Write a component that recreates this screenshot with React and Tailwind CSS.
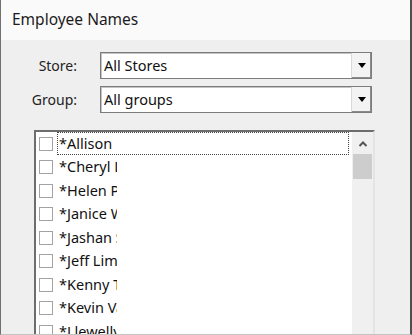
import React from "react"

const names = [
  "*Allison",
  "*Cheryl Lawson",
  "*Helen Parker",
  "*Janice Walker",
  "*Jashan Singh",
  "*Jeff Limon",
  "*Kenny Tran",
  "*Kevin Vance",
  "*Llewellyn Smith",
]

function Combo({ value }) {
  return (
    <div className="flex h-[27px] w-[272px] border border-[#7c7c7c] bg-white shadow-[inset_1px_1px_0_#c4c4c4]">
      <div className="flex flex-1 items-center pl-[3px] text-[14.5px] text-[#111]">{value}</div>
      <div className="flex w-[20px] items-center justify-center border-l border-[#d9d9d9] bg-[#f4f3f4] shadow-[inset_-1px_-1px_0_#8a8a8a]">
        <div className="h-0 w-0 border-x-[4px] border-t-[5px] border-x-transparent border-t-black" />
      </div>
    </div>
  )
}

export default function App() {
  return (
    <div
      className="h-[335px] w-[412px] overflow-hidden border-b border-l border-r-2 border-b-[#c4c4c4] border-l-[#707070] border-r-[#4f4f4f] bg-[#f0eff0]"
      style={{ fontFamily: '"Noto Sans", "Open Sans", sans-serif' }}
    >
      {/* title */}
      <div className="flex h-[40px] items-center bg-[#fbfafb] pl-[11px] text-[15.5px] text-[#1b1b1b]">
        Employee Names
      </div>

      {/* filters */}
      <div className="flex flex-col gap-[7px] pt-[12px]">
        <div className="flex items-center">
          <div className="w-[76px] text-right text-[14px] text-[#222]">Store:</div>
          <div className="ml-[23px]">
            <Combo value="All Stores" />
          </div>
        </div>
        <div className="flex items-center">
          <div className="w-[76px] text-right text-[14px] text-[#222]">Group:</div>
          <div className="ml-[23px]">
            <Combo value="All groups" />
          </div>
        </div>
      </div>

      {/* employee list */}
      <div className="ml-[33px] mt-[17px] flex h-[210px] w-[341px] border-l-2 border-t-2 border-r-2 border-l-[#6d6d6d] border-t-[#6d6d6d] border-r-[#e4e4e4] bg-white">
        <div className="flex flex-1 flex-col">
          {names.map((name, i) => (
            <div key={name} className="flex h-[23.5px] shrink-0 items-center">
              <div className="ml-[3px] h-[14px] w-[14px] border border-[#a3a3a3] bg-white" />
              <div
                className={
                  i === 0
                    ? "ml-[4px] flex h-[23px] w-[292px] items-center border border-dotted border-[#444]"
                    : "ml-[4px] flex h-[23px] w-[292px] items-center border border-transparent"
                }
              >
                <span className="w-[59px] overflow-hidden whitespace-nowrap pl-[1px] text-[14.5px] text-[#111]">
                  {name}
                </span>
              </div>
            </div>
          ))}
        </div>
        <div className="flex w-[21px] flex-col items-center bg-[#f0f0f0]">
          <svg width="10" height="22" viewBox="0 0 10 22" className="shrink-0">
            <path d="M1.5 14 L5 10.5 L8.5 14" fill="none" stroke="#555" strokeWidth="2" />
          </svg>
          <div className="h-[25px] w-[19px] bg-[#cdcdcd]" />
        </div>
      </div>
    </div>
  )
}
